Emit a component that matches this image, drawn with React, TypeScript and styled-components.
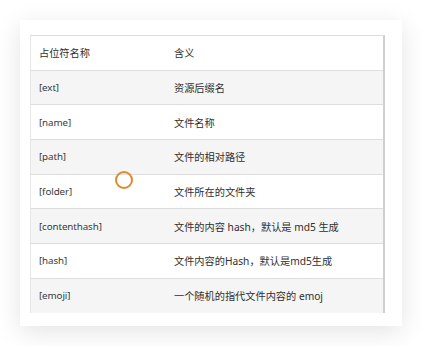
import styled, { createGlobalStyle } from 'styled-components';

const GlobalStyle = createGlobalStyle`
    html, body {
        margin : 0;
        padding : 0;
        background : #ffffff;
    }
    body {
        font-family : "Noto Sans", "Noto Sans CJK SC", sans-serif;
        color : #333;
    }
`

const rows = [
    { key : '[ext]', desc : '资源后缀名' },
    { key : '[name]', desc : '文件名称' },
    { key : '[path]', desc : '文件的相对路径' },
    { key : '[folder]', desc : '文件所在的文件夹' },
    { key : '[contenthash]', desc : '文件的内容 hash，默认是 md5 生成' },
    { key : '[hash]', desc : '文件内容的Hash，默认是md5生成' },
    { key : '[emoji]', desc : '一个随机的指代文件内容的 emoj' },
];

const App = () => {
    return (
        <StPage>
            <GlobalStyle />
            <StCard>
                <StClip>
                    <StTable>
                        <StRow>
                            <StHeadCell>占位符名称</StHeadCell>
                            <StHeadCell>含义</StHeadCell>
                        </StRow>
                        {rows.map((row, i) => (
                            <StRow key = {row.key} $striped = {i % 2 === 0}>
                                <StKeyCell>{row.key}</StKeyCell>
                                <StCell>{row.desc}</StCell>
                            </StRow>
                        ))}
                    </StTable>
                </StClip>
                <StCursor />
            </StCard>
        </StPage>
    )
}

export default App;

const StPage = styled.div`
    width : 422px;
    height : 346px;
    padding : 20px;
    box-sizing : border-box;
`

const StCard = styled.div`
    position : relative;
    width : 382px;
    height : 306px;
    box-sizing : border-box;
    padding : 15px 17px 0 10px;
    background : #fff;
    box-shadow : 0px 6px 24px rgba(0, 0, 0, .11);
`

const StClip = styled.div`
    height : 278px;
    overflow : hidden;
`

const StTable = styled.div`
    border-top : 1px solid #dcdcdc;
    border-left : 1px solid #e6e6e6;
    border-right : 2px solid #cfcfcf;
`

const StRow = styled.div<{ $striped? : boolean }>`
    display : grid;
    grid-template-columns : 135px 1fr;
    height : 34.7px;
    align-items : center;
    background : ${props => props.$striped ? '#f5f5f5' : '#fff'};
    border-bottom : 1.5px solid #dedede;
    box-sizing : border-box;
`

const StHeadCell = styled.div`
    padding-left : 8px;
    font-size : 10.2px;
    color : #2f2f2f;
`

const StCell = styled.div`
    padding-left : 8px;
    font-size : 10.2px;
    color : #2f2f2f;
    white-space : nowrap;
`

const StKeyCell = styled(StCell)`
    font-size : 9.8px;
    letter-spacing : -0.1px;
    color : #3a3a3a;
`

const StCursor = styled.div`
    position : absolute;
    left : 95px;
    top : 151px;
    width : 14px;
    height : 14px;
    border-radius : 50%;
    border : 2px solid #e08a2e;
`
